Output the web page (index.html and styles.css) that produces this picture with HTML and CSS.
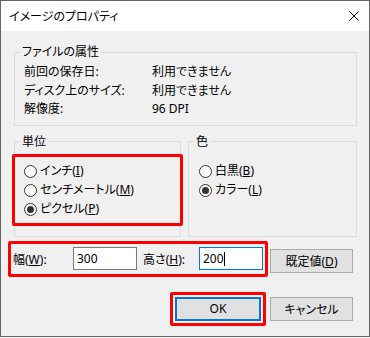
FILE: index.html
```html
<!DOCTYPE html>
<html lang="ja">
<head>
    <meta charset="UTF-8">
    <title>イメージのプロパティ</title>
    <link rel="stylesheet" href="styles.css">
</head>
<body>
    <div class="window">
        <div class="titlebar">
            <span class="title">イメージのプロパティ</span>
            <svg class="close" width="10" height="10" viewBox="0 0 10 10">
                <path d="M0.5 0.5 L9.5 9.5 M9.5 0.5 L0.5 9.5" stroke="#000" stroke-width="1" fill="none"/>
            </svg>
        </div>

        <div class="content">
            <fieldset class="group attrs">
                <legend>ファイルの属性</legend>
                <div class="attr-grid">
                    <span>前回の保存日:</span><span>利用できません</span>
                    <span>ディスク上のサイズ:</span><span>利用できません</span>
                    <span>解像度:</span><span>96 DPI</span>
                </div>
            </fieldset>

            <div class="options">
                <fieldset class="group units">
                    <legend>単位</legend>
                    <div class="mark radio-list">
                        <label class="radio"><span class="dot"></span><span>インチ(<u>I</u>)</span></label>
                        <label class="radio"><span class="dot"></span><span>センチメートル(<u>M</u>)</span></label>
                        <label class="radio"><span class="dot checked"></span><span>ピクセル(<u>P</u>)</span></label>
                    </div>
                </fieldset>
                <fieldset class="group colors">
                    <legend>色</legend>
                    <div class="radio-list plain">
                        <label class="radio"><span class="dot"></span><span>白黒(<u>B</u>)</span></label>
                        <label class="radio"><span class="dot checked"></span><span>カラー(<u>L</u>)</span></label>
                    </div>
                </fieldset>
            </div>

            <div class="size-row">
                <div class="mark size-fields">
                    <span class="size-label">幅(<u>W</u>):</span>
                    <span class="field">300</span>
                    <span class="size-label second">高さ(<u>H</u>):</span>
                    <span class="field focused">200<span class="caret"></span></span>
                </div>
                <button class="btn reset">既定値(<u>D</u>)</button>
            </div>

            <div class="actions">
                <div class="mark ok-mark"><button class="btn ok">OK</button></div>
                <button class="btn cancel">キャンセル</button>
            </div>
        </div>
    </div>
</body>
</html>
```

FILE: styles.css
```css
* {
    margin: 0;
    padding: 0;
    box-sizing: border-box;
}

body {
    font-family: "Noto Sans", "Noto Sans CJK JP", sans-serif;
    font-size: 12px;
    font-feature-settings: "palt";
    color: #000;
    background: #fff;
}

.window {
    width: 370px;
    height: 337px;
    border: 1px solid #646464;
    background: #f0f0f0;
}

.titlebar {
    height: 30px;
    background: #fff;
    display: flex;
    align-items: center;
    padding: 0 10px 0 8px;
}

.close {
    margin-left: auto;
}

.content {
    padding: 13px 12px 0 13px;
}

.group {
    border: 1px solid #dcdcdc;
    min-width: 0;
    padding: 0;
}

.group legend {
    margin-left: 5px;
    padding: 0 2px;
    line-height: 16px;
}

.attr-grid {
    display: grid;
    grid-template-columns: 128px auto;
    line-height: 18.5px;
    padding: 3px 0 6px 9px;
}

.options {
    display: flex;
    gap: 7px;
    margin-top: 8px;
}

.units {
    width: 167px;
}

.colors {
    flex: 1;
}

.mark {
    border: 3px solid #ff0000;
    border-radius: 2px;
}

.radio-list {
    margin: 4px -3px 10px -3px;
    padding: 5px 0 4px 9px;
}

.radio-list.plain {
    margin: 0;
    padding: 12px 0 0 10px;
}

.radio {
    display: flex;
    align-items: center;
    gap: 3px;
    height: 19px;
    line-height: 16px;
}

.dot {
    width: 13px;
    height: 13px;
    border: 1px solid #333;
    border-radius: 50%;
    background: #fff;
    display: flex;
    justify-content: center;
    align-items: center;
}

.dot.checked::after {
    content: "";
    width: 7px;
    height: 7px;
    border-radius: 50%;
    background: #333;
}

.size-row {
    display: flex;
    align-items: flex-start;
    margin: 4px 0 0 -6px;
}

.size-fields {
    width: 260px;
    height: 36px;
    display: flex;
    align-items: center;
    padding: 0 2px;
}

.size-label {
    width: 60px;
}

.size-label.second {
    width: 56px;
    margin-left: 6px;
}

.field {
    width: 64px;
    height: 23px;
    border: 1px solid #7a7a7a;
    background: #fff;
    padding-left: 3px;
    line-height: 21px;
}

.field.focused {
    border-color: #0078d7;
}

.caret {
    display: inline-block;
    width: 1px;
    height: 14px;
    background: #000;
    vertical-align: -3px;
}

.btn {
    font: inherit;
    color: #000;
    height: 24px;
    width: 83px;
    background: #e1e1e1;
    border: 1px solid #adadad;
}

.reset {
    margin: 8px 0 0 2px;
}

.actions {
    display: flex;
    justify-content: flex-end;
    align-items: flex-start;
    gap: 4px;
    margin-top: 15px;
    padding-right: 4px;
}

.ok-mark {
    width: 96px;
    padding: 2px;
}

.btn.ok {
    width: 86px;
    border: 2px solid #0078d7;
}

.cancel {
    margin-top: 5px;
}
```
